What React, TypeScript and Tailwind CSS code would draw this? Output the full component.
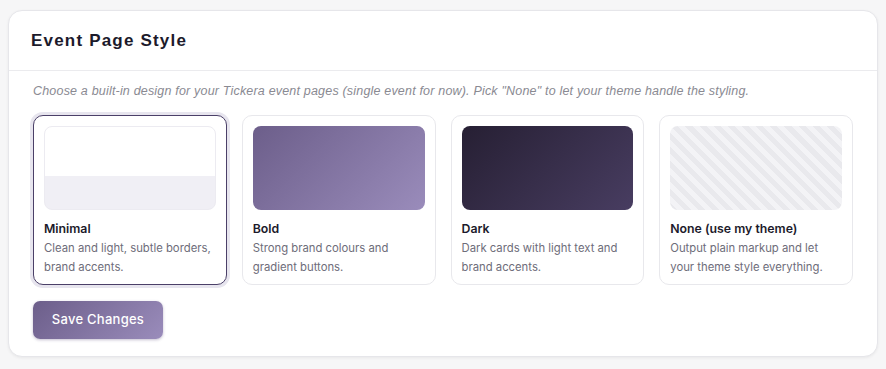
import React from "react";

const options = [
  {
    name: "Minimal",
    desc: "Clean and light, subtle borders, brand accents.",
    preview: "bg-[linear-gradient(to_bottom,#ffffff_0%,#ffffff_60%,#f0eff5_60%,#f0eff5_100%)] border border-[#ecebf1]",
    selected: true,
  },
  {
    name: "Bold",
    desc: "Strong brand colours and gradient buttons.",
    preview: "bg-[linear-gradient(135deg,#6c5e8a_0%,#9a8cbb_100%)]",
    selected: false,
  },
  {
    name: "Dark",
    desc: "Dark cards with light text and brand accents.",
    preview: "bg-[linear-gradient(135deg,#261f33_0%,#483d61_100%)]",
    selected: false,
  },
  {
    name: "None (use my theme)",
    desc: "Output plain markup and let your theme style everything.",
    preview:
      "bg-[repeating-linear-gradient(45deg,#e9e9ed_0px,#e9e9ed_5px,#f3f3f6_5px,#f3f3f6_10px)]",
    selected: false,
  },
];

export default function App() {
  return (
    <div className="min-h-[369px] bg-[#f6f6f7] pt-[10px] px-[8px] pb-[12px]">
      <div className="bg-white rounded-[14px] border border-[#e6e6ea] shadow-[0_1px_3px_rgba(0,0,0,0.06)]">
        <div className="h-[60px] flex items-center px-[22px] border-b border-[#ebebee]">
          <h1 className="font-['Liberation_Sans',Arial,sans-serif] font-bold text-[17px] tracking-[0.07em] text-[#1c1a2b] pt-[1px]">
            Event Page Style
          </h1>
        </div>
        <div className="px-[24px] pt-[12px] pb-[17px]">
          <p className="font-['Liberation_Sans',Arial,sans-serif] italic text-[12.5px] tracking-[0.015em] text-[#8a8a92] leading-[16px] whitespace-nowrap">
            Choose a built-in design for your Tickera event pages (single event for now). Pick "None" to let your theme handle the styling.
          </p>
          <div className="grid grid-cols-4 gap-[15px] mt-[16px]">
            {options.map((o) =>
              <div
                key={o.name}
                className={
                  o.selected
                    ? "h-[170px] rounded-[10px] border border-[#4b4068] ring-[3px] ring-[#e7e5ee] p-[10px] bg-white"
                    : "h-[170px] rounded-[10px] border border-[#e8e8ec] p-[10px] bg-white"
                }
              >
                <div className={"h-[84px] rounded-[8px] " + o.preview} />
                <div className="font-['Inter',sans-serif] mt-[11px] text-[12.3px] font-semibold text-[#1c1a2b] leading-[16px]">
                  {o.name}
                </div>
                <div className="font-['Inter',sans-serif] mt-[2px] text-[11.3px] text-[#6e6d7a] leading-[19px] pr-[2px]">
                  {o.desc}
                </div>
              </div>
            )}
          </div>
          <button className="mt-[16px] h-[38px] w-[130px] rounded-[7px] bg-[linear-gradient(135deg,#6c5e8a_0%,#9a8cbb_100%)] shadow-[0_1px_3px_rgba(60,40,100,0.3)] text-white font-['Inter',sans-serif] font-medium text-[13px] tracking-[0.02em]">
            Save Changes
          </button>
        </div>
      </div>
    </div>
  );
}
